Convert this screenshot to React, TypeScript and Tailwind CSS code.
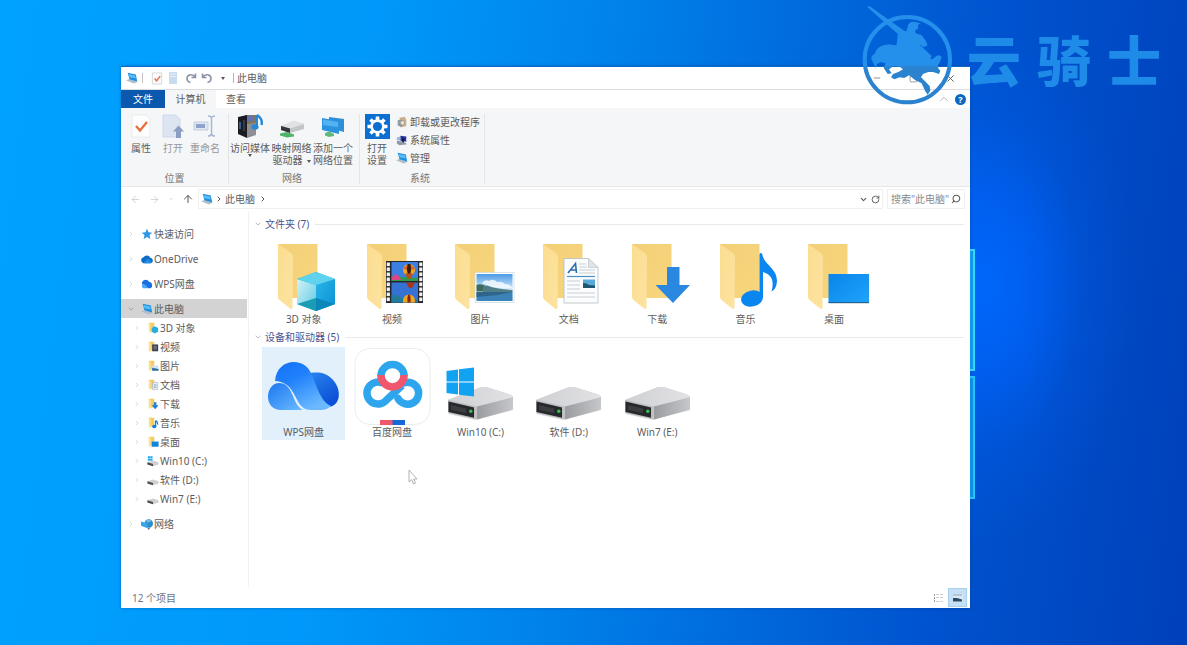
import type { ReactNode } from "react";
import {
  ArrowLeft,
  ArrowRight,
  ArrowUp,
  ChevronDown,
  ChevronRight,
  ChevronUp,
  Minus,
  RotateCw,
  Search,
  Square,
  X,
} from "lucide-react";

/* ---------- small icons ---------- */

const PcIcon = ({ className = "h-3 w-3" }: { className?: string }) => (
  <svg viewBox="0 0 14 14" className={className} aria-hidden="true">
    <path d="M0 9.5 L9 13.500 L14 11.5 L5 8z" fill="#b3bec8" />
    <path d="M2 1 L11.500 3 L13 11 L4 8.500z" fill="#1b8fe0" />
    <path d="M3 2.2 L10.800 4 L11.500 7.500 L4 6z" fill="#5cbcf7" />
  </svg>
);

const StarIcon = () => (
  <svg viewBox="0 0 14 14" className="h-3 w-3" aria-hidden="true">
    <path d="M7 1 L8.8 5 L13.2 5.4 L9.9 8.3 L10.9 12.7 L7 10.4 L3.1 12.7 L4.1 8.3 L.8 5.4 L5.2 5z" fill="#2f97e6" />
  </svg>
);

const OneDriveIcon = () => (
  <svg viewBox="0 0 14 14" className="h-3 w-3 scale-110" aria-hidden="true">
    <path d="M3.5 11.5 A3.2 3.2 0 0 1 3.3 5.2 A4 4 0 0 1 10.4 5.6 A3 3 0 0 1 11 11.5z" fill="#0f6cc4" />
    <path d="M3 11.5 L8 6.5 L12.5 10.8 Q12 11.5 11 11.5z" fill="#1d8de6" />
  </svg>
);

const WpsSmallIcon = () => (
  <svg viewBox="0 0 14 14" className="h-3 w-3 overflow-visible" aria-hidden="true">
    <path d="M1 7 A4.500 4.500 0 0 1 9.4 4.500 A4 4 0 0 1 11 12 H8.5z" fill="#1c6fe0" />
    <path d="M3 7.200 Q6 7 7.600 12 H2.600 A2.500 2.500 0 0 1 3 7.200z" fill="#4aa6f8" />
  </svg>
);

const NetworkIcon = () => (
  <svg viewBox="0 0 14 14" className="h-3 w-3 overflow-visible" aria-hidden="true">
    <circle cx="9" cy="6.5" r="5" fill="#2e8cc9" />
    <path d="M6 3 Q9 0 12.500 3 Q10 6 6.5 5z" fill="#6fbde6" />
    <path d="M0 4 L7.500 6 V12 L0 9z" fill="#39a4ea" />
    <path d="M7.500 12 L11 11 L9 14z" fill="#51718c" />
  </svg>
);

const MiniFolder = ({ children }: { children: ReactNode }) => (
  <svg viewBox="0 0 14 14" className="h-3 w-3" aria-hidden="true">
    <path d="M2 1 H8.5 V11 H5z" fill="#f3cb60" />
    <path d="M2 1 L4.8 3 V13 L2 11z" fill="#fddf8c" />
    {children}
  </svg>
);

const MiniDrive = ({ win = false }: { win?: boolean }) => (
  <svg viewBox="0 0 14 14" className="h-3 w-3" aria-hidden="true">
    {win && <path d="M1 1.5 H3.4 V3.9 H1z M3.8 1.5 H6.5 V3.9 H3.8z M1 4.3 H3.4 V6.8 H1z M3.8 4.3 H6.5 V6.8 H3.8z" fill="#18a5f0" />}
    <path d="M.5 8.5 L7 6.5 L13.5 8.5 V11 L7 13 L.5 11z" fill="#d0d0d2" />
    <path d="M.5 8.6 L7 10.6 V13 L.5 11z" fill="#4b4d50" />
  </svg>
);

const CurvedArrow = ({ flip = false }: { flip?: boolean }) => (
  <svg viewBox="0 0 12 12" className={`h-3 w-3 ${flip ? "-scale-x-100" : ""}`} aria-hidden="true">
    <path d="M10.500 1.500 V5.500 H6.500 M10 5 C8 1.500 2 2 2 6.500 Q2 9.500 5.500 10.500" fill="none" stroke="#8d93a8" strokeWidth="1.600" />
  </svg>
);

/* ---------- big icons, drawn on an 83 x 77 canvas ---------- */

const Canvas = ({ children }: { children: ReactNode }) => (
  <svg viewBox="0 0 83 77" className="h-[77px] w-[83px] overflow-visible" aria-hidden="true">
    {children}
  </svg>
);

const Folder = ({ children }: { children: ReactNode }) => (
  <Canvas>
    <path d="M16 10 H55.500 V64 H29z" fill="url(#folderBack)" />
    <path d="M16 10 L29 19 Q31 20.500 31 23 L30.500 73 Q30.500 76 28 74.500 L17.500 66 Q16 65 16 63z" fill="url(#folderFront)" />
    {children}
  </Canvas>
);

const Cube = () => (
  <Folder>
    <path d="M54 38 L73 45 V70 L54 77 L35 70 V45z" fill="#1fb1d9" />
    <path d="M35 45 L54 51 V77 L35 70z" fill="url(#cubeLeft)" />
    <path d="M54 51 L73 45 V70 L54 77z" fill="url(#cubeRight)" />
    <path d="M35 45 L54 38 L73 45 L54 51z" fill="#5fd2ee" />
    <path d="M35 70 L54 64 L54 77z" fill="#1a9cb4" />
    <path d="M54 64 L73 70 L54 77z" fill="#0a86b8" />
  </Folder>
);

const Balloon = ({ x, y, r }: { x: number; y: number; r: number }) => (
  <g transform={`translate(${x} ${y}) scale(${r})`}>
    <circle r="1" fill="#f2a71c" />
    <path d="M-.9 -.3 Q0 -1.400 .9 -.3 L.8 -.1 H-.8z" fill="#d8602a" />
    <path d="M-.25 -1 Q-.5 0 -.15 1 H.15 Q.5 0 .25 -1z" fill="#3a1a12" />
    <path d="M-.7 .6 L-.2 1.500 H.2 L.7 .6z" fill="#b5521a" />
  </g>
);

const FilmStrip = () => (
  <Folder>
    <rect x="35" y="27" width="37" height="42" fill="#24262b" />
    {[35.7, 68.2].map((x) =>
      [28.5, 33.5, 38.5, 43.5, 48.5, 53.5, 58.5, 63.5].map((y) => (
        <rect key={`${x}-${y}`} x={x} y={y} width="3.2" height="3.6" fill="#f1f1f1" />
      ))
    )}
    <rect x="40.500" y="28" width="26.500" height="19" fill="#3b7fe0" />
    <path d="M40.500 42 Q46 40 50 43 L67 44 V47 H40.500z" fill="#2f9a4a" />
    <path d="M41 43 L44 40 L48 42 L50 46 H41z" fill="#d8478d" />
    <Balloon x={58} y={36} r={6} />
    <rect x="40.500" y="48.500" width="26.500" height="20" fill="#3672d4" />
    <path d="M55 48.500 H64 L61 54 H58z" fill="#a8341c" />
    <path d="M40.500 61 Q46 59 50 64 L67 66 V68.500 H40.500z" fill="#237c9c" />
    <path d="M52 68.500 Q51.500 61 58 60.500 Q64.500 61 64 68.500z" fill="#f2a71c" />
    <path d="M56.500 68.500 Q56 62 57.500 60.500 H58.500 Q60 62 59.500 68.500z" fill="#8c2614" />
  </Folder>
);

const Photo = () => (
  <Folder>
    <rect x="36" y="38.500" width="39" height="30" fill="#fff" stroke="#cfd6dc" strokeWidth=".7" />
    <rect x="37.500" y="40" width="36" height="27" fill="url(#photoSky)" />
    <path d="M43 49 q3 -4 7 -2 q4 -3 8 1 q5 -1 8 2 q4 0 7 3 V54 Q56 56 43 49z" fill="#f4fafe" opacity=".85" />
    <path d="M37.500 51 Q43 49 48 53 Q54 56 64 57.500 H37.500z" fill="#3d6a5c" />
    <path d="M44 53 Q47 50 52 53 Q58 55 73.500 56 V58 H44z" fill="#4f7f86" />
    <path d="M37.500 58 H73.500 V67 H37.500z" fill="#3a82b8" />
    <path d="M37.500 58 H73.500 L58 61 L37.500 63z" fill="#2f6589" />
  </Folder>
);

const DocumentPage = () => (
  <Folder>
    <path d="M37 24.500 H61.500 L71 33.500 V69 H37z" fill="#fbfcfd" stroke="#b7bcc2" strokeWidth=".8" />
    <path d="M61.500 24.500 V33.500 H71z" fill="#dfe4ea" stroke="#b7bcc2" strokeWidth=".6" />
    <path d="M52 30 H59 M52 33 H60 M52 36 H68 M52 39 H68 M40 47 H53 M40 51 H53 M40 55 H53 M40 59 H68 M40 63 H68" stroke="#c9ced4" strokeWidth="1" />
    <path d="M40 42.500 H68" stroke="#4b93c4" strokeWidth="1.200" />
    <path d="M41 39 L48.500 29.500 L49.500 39 M44 36 H49" fill="none" stroke="#2c6fae" strokeWidth="1.600" />
    <rect x="56" y="45.500" width="12" height="8.500" fill="#57a9d8" />
    <path d="M56 49 Q60 49 62 51 L68 51.500 V54 H56z" fill="#1f5674" />
  </Folder>
);

const DownloadArrow = () => (
  <Folder>
    <path d="M51 33 H63.500 V51 H74 L57 69 L39.500 51 H51z" fill="#2b88e0" />
  </Folder>
);

const MusicNote = () => (
  <Folder>
    <ellipse cx="48" cy="64.500" rx="11" ry="8" transform="rotate(-12 48 64.500)" fill="#0a86f0" />
    <path d="M55.500 20 Q57 18 58.200 20 C60 31 73 34 73 47 Q72.500 55 67.500 57.500 C70 48 69 41 59 38 L59 64 L55.500 64z" fill="#0a86f0" />
  </Folder>
);

const DesktopScreen = () => (
  <Folder>
    <rect x="36.500" y="40" width="40.500" height="29" fill="url(#screenBlue)" />
    <rect x="36.500" y="68" width="40.500" height="1.200" fill="#23618f" />
  </Folder>
);

const WpsCloud = () => (
  <Canvas>
    <path d="M45 27 C55 24 64 26 69 31 C75 36 78 44 76.500 51 C75 57 71 60 65 60 C56 54 50 40 45 27z" fill="url(#wpsRight)" />
    <path d="M13 34 C14 21 23 15 31.500 15 C41 15 46.500 20 50 28 C55 40 59 55 69 59 Q65 63 59 63 H48 C39 63 36 54 32 47 C28 39 21 34 13 34z" fill="url(#wpsMain)" />
    <path d="M17 36 C25 36 28 42 31 49 C34 57 37 61 41 63 H19 C11 63 6 57 6 50 C6 42 11 36 17 36z" fill="url(#wpsLeft)" />
  </Canvas>
);

const BaiduDisk = () => (
  <Canvas>
    <rect x="4" y="1.500" width="75" height="76" rx="15" fill="#fff" stroke="#ececee" />
    <g fill="none" strokeWidth="7.500">
      <path d="M51 38.500 L35.500 53 A11 11 0 1 1 32 36.300" stroke="#2ea6ee" />
      <path d="M52.500 36 A11 11 0 1 1 47 51.500" stroke="#2ea6ee" strokeLinecap="round" />
      <path d="M29.900 29 A11.600 11.600 0 0 1 53.100 29" stroke="#2ea6ee" />
      <path d="M29.900 28 A11.600 12 0 0 0 53.100 28" stroke="#f0566c" />
    </g>
    <rect x="29" y="73" width="13" height="5" fill="#f0566c" />
    <rect x="41.500" y="73" width="12.500" height="5" fill="#1668d8" />
  </Canvas>
);

const Drive = ({ win = false }: { win?: boolean }) => (
  <Canvas>
    <path d="M9 67 L36 73 L75 63 L70 60z" fill="#000" opacity=".12" />
    <path d="M9 53 L41 40.500 Q45 39.500 49 40.500 L71 47.500 Q74 49 74 50.500 V61 Q74 62.500 72 63 L38 72.500 L9 66z" fill="#c4c5c8" />
    <path d="M9 53 L41 40.500 Q45 39.500 49 40.500 L71 47.500 Q74 49 73 50.500 L38 59.500z" fill="url(#driveTop)" />
    <path d="M38 59.500 L74 50.500 V61 Q74 62.500 72 63 L38 72.500z" fill="url(#driveSide)" />
    <path d="M9 53 L36.500 59.500 V72 L9 66z" fill="#bdbec0" />
    <path d="M9.500 54.500 L35 60.500 V70.800 L9.500 65z" fill="#26282b" />
    <path d="M12 58 L27 61.500 V66 L12 63z" fill="#3b3d40" />
    <circle cx="31.800" cy="64.300" r="1.700" fill="#35c24e" />
    {win && (
      <path d="M7.500 24 L19 22.500 V34.500 H7.500z M20 22.300 L35 20.500 V34.500 H20z M7.500 35.500 H19 V47.500 L7.500 46z M20 35.500 H35 V49.500 L20 47.700z" fill="#12a2f2" />
    )}
  </Canvas>
);

/* gradients shared by the drawings above */
const Gradients = () => (
  <svg className="absolute h-0 w-0" aria-hidden="true">
    <defs>
      <linearGradient id="folderBack" x1="0" y1="0" x2="1" y2="1">
        <stop offset="0" stopColor="#f3d078" />
        <stop offset="1" stopColor="#f8d67c" />
      </linearGradient>
      <linearGradient id="folderFront" x1="0" y1="0" x2="1" y2="1">
        <stop offset="0" stopColor="#fbdd90" />
        <stop offset="1" stopColor="#fde3a0" />
      </linearGradient>
      <linearGradient id="cubeLeft" x1="0" y1="0" x2="1" y2="1">
        <stop offset="0" stopColor="#d3f3f8" />
        <stop offset="1" stopColor="#5cc9e0" />
      </linearGradient>
      <linearGradient id="cubeRight" x1="0" y1="0" x2="1" y2="1">
        <stop offset="0" stopColor="#2ab5ea" />
        <stop offset="1" stopColor="#0a8fd2" />
      </linearGradient>
      <linearGradient id="photoSky" x1="0" y1="0" x2="0" y2="1">
        <stop offset="0" stopColor="#4d9be6" />
        <stop offset=".6" stopColor="#d5ebfa" />
      </linearGradient>
      <linearGradient id="screenBlue" x1="0" y1="0" x2="1" y2="1">
        <stop offset="0" stopColor="#0a84ea" />
        <stop offset="1" stopColor="#1ea4fb" />
      </linearGradient>
      <linearGradient id="wpsMain" x1="0" y1="0" x2=".6" y2="1">
        <stop offset="0" stopColor="#1372f6" />
        <stop offset=".4" stopColor="#1f80fb" />
        <stop offset="1" stopColor="#6bb9ff" />
      </linearGradient>
      <linearGradient id="wpsRight" x1="0" y1="0" x2=".6" y2="1">
        <stop offset="0" stopColor="#2a86ee" />
        <stop offset="1" stopColor="#0b4fd6" />
      </linearGradient>
      <linearGradient id="wpsLeft" x1="0" y1="0" x2="1" y2="1">
        <stop offset="0" stopColor="#1b76f0" />
        <stop offset="1" stopColor="#6cbcff" />
      </linearGradient>
      <linearGradient id="driveTop" x1="0" y1="0" x2="1" y2="0">
        <stop offset="0" stopColor="#cfd0d3" />
        <stop offset="1" stopColor="#e2e2e5" />
      </linearGradient>
      <linearGradient id="driveSide" x1="0" y1="0" x2="1" y2="0">
        <stop offset="0" stopColor="#9b9c9f" />
        <stop offset="1" stopColor="#c6c7ca" />
      </linearGradient>
    </defs>
  </svg>
);

/* ---------- data ---------- */

const folders = [
  { name: "3D 对象", icon: <Cube /> },
  { name: "视频", icon: <FilmStrip /> },
  { name: "图片", icon: <Photo /> },
  { name: "文档", icon: <DocumentPage /> },
  { name: "下载", icon: <DownloadArrow /> },
  { name: "音乐", icon: <MusicNote /> },
  { name: "桌面", icon: <DesktopScreen /> },
];

const drives = [
  { name: "WPS网盘", icon: <WpsCloud />, selected: true },
  { name: "百度网盘", icon: <BaiduDisk /> },
  { name: "Win10 (C:)", icon: <Drive win /> },
  { name: "软件 (D:)", icon: <Drive /> },
  { name: "Win7 (E:)", icon: <Drive /> },
];

const pcChildren = [
  { name: "3D 对象", icon: <MiniFolder><path d="M9 5 L13 7 V11.500 L9 13.500 L5.500 11.500 V7z" fill="#25aede" /></MiniFolder> },
  { name: "视频", icon: <MiniFolder><path d="M6 4 H13 V12 H6z" fill="#3a4050" /><path d="M7.500 5.500 H11.500 V10 H7.500z" fill="#6c6a7c" /></MiniFolder> },
  { name: "图片", icon: <MiniFolder><path d="M6 6.500 H13.500 V12.500 H6z" fill="#cfe3f2" /><path d="M6 9 L13.500 10.500 V12.500 H6z" fill="#2f6fa8" /></MiniFolder> },
  { name: "文档", icon: <MiniFolder><path d="M6.500 4 H12.500 V12.500 H6.500z" fill="#e8eef3" stroke="#9db2c4" strokeWidth=".7" /><path d="M8 7 H11 M8 9.500 H11" stroke="#5b93bd" /></MiniFolder> },
  { name: "下载", icon: <MiniFolder><path d="M8 5 H11 V8.500 H13.500 L9.500 13 L5.500 8.500 H8z" fill="#1f7fdb" /></MiniFolder> },
  { name: "音乐", icon: <MiniFolder><ellipse cx="8.500" cy="11" rx="2.500" ry="2" fill="#0a80e8" /><path d="M10 4 V11 M10.300 4 Q13 6 12.500 9" fill="none" stroke="#0a80e8" strokeWidth="1.500" /></MiniFolder> },
  { name: "桌面", icon: <MiniFolder><path d="M5.500 6.500 H13.500 V12.500 H5.500z" fill="#0f84e2" /></MiniFolder> },
  { name: "Win10 (C:)", icon: <MiniDrive win /> },
  { name: "软件 (D:)", icon: <MiniDrive /> },
  { name: "Win7 (E:)", icon: <MiniDrive /> },
];

/* ---------- ribbon ---------- */

const RibbonButton = ({ icon, lines, className }: { icon: ReactNode; lines: ReactNode[]; className: string }) => (
  <button className={`flex flex-col items-center ${className}`}>
    <span className="mb-1 flex h-6 items-center justify-center">{icon}</span>
    {lines.map((line, i) => (
      <span key={i} className="flex whitespace-nowrap leading-3">{line}</span>
    ))}
  </button>
);

const RibbonGroup = ({ title, className, children }: { title: string; className: string; children: ReactNode }) => (
  <section className={`flex flex-col justify-between border-r border-[#e4e5e7] ${className}`}>
    <div className="flex">{children}</div>
    <h2 className="pr-1 text-center leading-3 text-[#777]">{title}</h2>
  </section>
);

const Caret = ({ className = "" }: { className?: string }) => (
  <svg viewBox="0 0 4 3" className={`inline-block h-[3px] w-1 align-middle ${className}`} aria-hidden="true">
    <path d="M0 0 H4 L2 3z" fill="#555" />
  </svg>
);

const Ribbon = () => (
  <div className="flex h-[79px] border-b border-[#e6e7e8] bg-[#f5f6f7] pb-[2px] pt-[6px]">
    <RibbonGroup title="位置" className="w-[108px] pl-1">
      <RibbonButton
        className="w-8"
        lines={["属性"]}
        icon={
          <svg viewBox="0 0 20 24" className="h-6 w-5">
            <path d="M1 1 H15 L19 5 V23 H1z" fill="#fdfdfe" stroke="#e6e8ea" strokeWidth=".8" />
            <path d="M5 12 L9 16.500 L16 8" fill="none" stroke="#e2713e" strokeWidth="2.400" />
          </svg>
        }
      />
      <RibbonButton
        className="w-8 text-[#999]"
        lines={["打开"]}
        icon={
          <svg viewBox="0 0 22 24" className="h-6 w-[22px]">
            <path d="M1 1 H14 L18 5 V23 H1z" fill="#dde5f3" stroke="#c9d4e8" strokeWidth=".8" />
            <path d="M16.500 11.500 L22 17.500 H19 V24 H14 V17.500 H11z" fill="#8b9dc0" />
          </svg>
        }
      />
      <RibbonButton
        className="w-8 text-[#999]"
        lines={["重命名"]}
        icon={
          <svg viewBox="0 0 24 24" className="h-6 w-6">
            <path d="M1 8 H15 V16 H1z" fill="#dfe6f3" stroke="#b9c5dc" strokeWidth=".8" />
            <path d="M3 10 H12 V14 H3z" fill="#8fa3ca" />
            <path d="M15 2 Q18 2 18.500 4 Q19 2 22 2 M18.500 4 V20 M15 22 Q18 22 18.500 20 Q19 22 22 22" fill="none" stroke="#a9b7d2" strokeWidth="1.500" />
          </svg>
        }
      />
    </RibbonGroup>

    <RibbonGroup title="网络" className="w-[131px]">
      <RibbonButton
        className="w-[42px]"
        lines={["访问媒体", <Caret key="c" />]}
        icon={
          <svg viewBox="0 0 26 24" className="h-6 w-[26px]">
            <path d="M8 1 H19 V12 H8z" fill="#80765c" />
            <path d="M9 2 H17 V7 H9z" fill="#6470b8" />
            <path d="M10 10 L19 9 V21 L10 24z" fill="#8d8f93" />
            <path d="M1 3 L10 1 V24 L1 20z" fill="#1a1c22" />
            <path d="M3 8 V15" stroke="#4c86d8" strokeWidth="1.200" />
            <path d="M7 6 V17" stroke="#4b4f58" strokeWidth="1.200" />
            <path d="M20 1 Q26 5 24.500 11" fill="none" stroke="#2488d6" strokeWidth="2.400" />
            <path d="M20 1 V12" stroke="#2488d6" strokeWidth="2" />
            <ellipse cx="18" cy="13" rx="3.600" ry="2.800" fill="#2488d6" />
          </svg>
        }
      />
      <RibbonButton
        className="w-[41px]"
        lines={["映射网络", <span key="d">驱动器<Caret className="ml-1" /></span>]}
        icon={
          <svg viewBox="0 0 26 24" className="h-6 w-[26px]">
            <path d="M2 12 L15 7 L25 10 V15 L11 19 L2 16z" fill="#c3c5c8" />
            <path d="M2 12 L15 7 L25 10 L11 14.500z" fill="#e1e2e4" />
            <path d="M2 12 L11 14.500 V19 L2 16z" fill="#33363a" />
            <path d="M1 19.500 L8 18 L15 20.500 V22.500 L8 23.500 L1 21.500z" fill="#4fb36a" />
          </svg>
        }
      />
      <RibbonButton
        className="w-[42px]"
        lines={["添加一个", "网络位置"]}
        icon={
          <svg viewBox="0 0 26 24" className="h-6 w-[26px]">
            <path d="M9 3 L24 5 V18 L9 14z" fill="#2f8ed6" />
            <path d="M2 4 L19 7 V20 L2 16z" fill="#2b93e0" />
            <path d="M3 5.500 L18 8 V13 L3 11z" fill="#53b3f2" />
            <path d="M5 19 L9 17.500 L14 20 V22 L9 23 L5 21.500z" fill="#5fba76" />
          </svg>
        }
      />
    </RibbonGroup>

    <RibbonGroup title="系统" className="w-[125px]">
      <RibbonButton
        className="w-[34px]"
        lines={["打开", "设置"]}
        icon={
          <svg viewBox="0 0 25 25" className="h-[25px] w-[25px]">
            <rect width="25" height="25" fill="#0a6fd0" />
            <g stroke="#fff" strokeWidth="3.600">
              <path d="M12.500 2.500 V22.500 M2.500 12.500 H22.500 M5.500 5.500 L19.500 19.500 M19.500 5.500 L5.500 19.500" />
            </g>
            <circle cx="12.500" cy="12.500" r="7.200" fill="#fff" />
            <circle cx="12.500" cy="12.500" r="4.600" fill="#0a6fd0" />
          </svg>
        }
      />
      <ul className="flex flex-col gap-[6px] pl-[2px] pt-[2px]">
        <li>
          <button className="flex items-center gap-[2px] whitespace-nowrap leading-3">
            <svg viewBox="0 0 14 14" className="h-3 w-3">
              <path d="M4 2 L10 1 L12 4 V12 L5 13z" fill="#c9b08e" />
              <path d="M2 5 L7 4 V13 L2 11z" fill="#8e9aa5" />
              <circle cx="7.500" cy="8" r="2.500" fill="#e9e4dc" stroke="#9a8f80" strokeWidth=".8" />
            </svg>
            卸载或更改程序
          </button>
        </li>
        <li>
          <button className="flex items-center gap-[2px] whitespace-nowrap leading-3">
            <svg viewBox="0 0 14 14" className="h-3 w-3">
              <path d="M5 2 L12 3 V9 L5 8z" fill="#2338a8" />
              <path d="M1 4 L5 3 V8 L1 7z" fill="#9fb4d8" />
              <path d="M1 8 L9 9 L13 12 L4 13 L1 11z" fill="#8f98a8" />
              <path d="M7 4 L10 5 L9 10 L7 9z" fill="#141c4c" />
            </svg>
            系统属性
          </button>
        </li>
        <li>
          <button className="flex items-center gap-[2px] whitespace-nowrap leading-3">
            <PcIcon />
            管理
          </button>
        </li>
      </ul>
    </RibbonGroup>
  </div>
);

/* ---------- window parts ---------- */

const TitleBar = () => (
  <header className="flex h-[23px] items-center border-b border-[#dcdde0] pl-[5px] pr-[14px]">
    <PcIcon />
    <span className="ml-1 h-[10px] border-l border-[#c4c4c4]" />
    <button aria-label="属性" className="ml-2">
      <svg viewBox="0 0 12 14" className="h-[13px] w-3">
        <path d="M1 1 H11 V13 H1z" fill="#fbfbfb" stroke="#d6d6da" />
        <path d="M3.500 7 L5.500 9.500 L9.500 4.500" fill="none" stroke="#df6a4a" strokeWidth="1.500" />
      </svg>
    </button>
    <button aria-label="新建文件夹" className="ml-[6px]">
      <svg viewBox="0 0 8 12" className="h-3 w-2">
        <path d="M0 0 H8 V12 H0z" fill="#c9dbee" />
        <path d="M1 2 H7 M1 4.500 H7" stroke="#e6eff8" />
      </svg>
    </button>
    <button aria-label="恢复" className="ml-2"><CurvedArrow /></button>
    <button aria-label="撤销" className="ml-1"><CurvedArrow flip /></button>
    <button aria-label="自定义快速访问工具栏" className="ml-2 flex h-3 items-center"><Caret /></button>
    <span className="ml-2 mr-[3px] h-[10px] border-l border-[#b4b4b4]" />
    <h1>此电脑</h1>
    <div className="ml-auto flex items-center gap-[27px] text-[#555]">
      <button aria-label="最小化"><Minus size={10} strokeWidth={1.5} /></button>
      <button aria-label="最大化"><Square size={9} strokeWidth={1.5} /></button>
      <button aria-label="关闭"><X size={11} strokeWidth={2} /></button>
    </div>
  </header>
);

const Tabs = () => (
  <div className="flex h-[18px] items-stretch pr-1" role="tablist">
    <button role="tab" className="w-11 bg-[#0a59ae] text-white">文件</button>
    <button role="tab" aria-selected="true" className="w-[51px] bg-[#f5f6f7]">计算机</button>
    <button role="tab" className="w-10">查看</button>
    <div className="ml-auto flex items-center gap-1">
      <button aria-label="最小化功能区" className="text-[#aaa]"><ChevronUp size={14} strokeWidth={1.5} /></button>
      <button aria-label="帮助" className="flex h-[11px] w-[11px] items-center justify-center rounded-full bg-[#0a68be] text-[9px] font-bold leading-none text-white">?</button>
    </div>
  </div>
);

const AddressRow = () => (
  <div className="flex h-[24px] items-center gap-1 px-[5px]">
    <div className="flex w-[68px] items-center justify-between pl-1">
      <button aria-label="后退" className="text-[#c2c2c2]"><ArrowLeft size={11} strokeWidth={1.5} /></button>
      <button aria-label="前进" className="text-[#c2c2c2]"><ArrowRight size={11} strokeWidth={1.5} /></button>
      <button aria-label="最近位置" className="text-[#c2c2c2]"><ChevronDown size={6} /></button>
      <button aria-label="上移" className="text-[#555]"><ArrowUp size={12} strokeWidth={2} /></button>
    </div>
    <div className="flex h-5 flex-1 items-center border border-[#f0f0f1] px-[2px]">
      <PcIcon />
      <ChevronRight size={8} strokeWidth={3} className="mx-[2px] text-[#555]" />
      <button>此电脑</button>
      <ChevronRight size={8} strokeWidth={3} className="ml-1 text-[#555]" />
      <button aria-label="以前的位置" className="ml-auto"><ChevronDown size={9} strokeWidth={3} /></button>
      <button aria-label="刷新" className="ml-[3px]"><RotateCw size={9} strokeWidth={2.5} /></button>
    </div>
    <label className="flex h-5 w-[78px] items-center border border-[#f0f0f1] px-[3px]">
      <input aria-label="搜索" placeholder={'搜索"此电脑"'} className="w-full min-w-0 flex-1 outline-none placeholder:text-[#8a8a8a]" />
      <Search size={10} strokeWidth={2.5} className="shrink-0 -scale-x-100" />
    </label>
  </div>
);

const TreeRow = ({ icon, name, child = false, open = false }: { icon: ReactNode; name: string; child?: boolean; open?: boolean }) => (
  <a
    href="#"
    className={`mr-[1px] flex h-[19px] items-center whitespace-nowrap ${child ? "pl-3" : "pl-[6px]"} ${open ? "bg-[#d3d3d3]" : ""}`}
  >
    {open ? (
      <ChevronDown size={8} strokeWidth={2} className="text-[#888]" />
    ) : (
      <ChevronRight size={8} strokeWidth={2} className="text-[#c8c8c8]" />
    )}
    <span className="ml-[6px] mr-[1px]">{icon}</span>
    {name}
  </a>
);

const Sidebar = () => (
  <nav className="w-32 shrink-0 border-r border-[#f0f0f0] pt-[13px]">
    <ul className="flex flex-col gap-[6px]">
      <li><TreeRow icon={<StarIcon />} name="快速访问" /></li>
      <li><TreeRow icon={<OneDriveIcon />} name="OneDrive" /></li>
      <li><TreeRow icon={<WpsSmallIcon />} name="WPS网盘" /></li>
      <li>
        <TreeRow icon={<PcIcon />} name="此电脑" open />
        <ul>
          {pcChildren.map((item) => (
            <li key={item.name}><TreeRow icon={item.icon} name={item.name} child /></li>
          ))}
        </ul>
      </li>
      <li><TreeRow icon={<NetworkIcon />} name="网络" /></li>
    </ul>
  </nav>
);

type Item = { name: string; icon: ReactNode; selected?: boolean };

const ItemGroup = ({ title, items }: { title: string; items: Item[] }) => (
  <section>
    <h2 className="flex h-5 items-center text-[#4c5490]">
      <ChevronDown size={8} strokeWidth={2} className="ml-[5px] mr-[3px] text-[#999]" />
      {title}
      <span className="ml-[6px] flex-1 border-t border-[#e9e9ec]" />
    </h2>
    <div className="grid grid-cols-8 gap-[5px] pl-[13px]">
      {items.map((item) => (
        <button
          key={item.name}
          className={`flex h-[93px] flex-col items-center ${item.selected ? "bg-[#e2f0fc]" : ""}`}
        >
          {item.icon}
          <span className="relative whitespace-nowrap leading-4">{item.name}</span>
        </button>
      ))}
    </div>
  </section>
);

const StatusBar = () => (
  <footer className="flex h-[21px] items-center pl-[11px] pr-[3px] text-[#6d7484]">
    <span>12 个项目</span>
    <button aria-label="详细信息" className="ml-auto mr-1 flex h-[19px] items-center">
      <svg viewBox="0 0 10 10" className="h-[10px] w-[10px]">
        <path d="M.5 1 V9" stroke="#999" strokeDasharray="2 1" />
        <path d="M2 1.500 H5 M6 1.500 H9 M2 4.500 H5 M6 4.500 H9 M2 8.500 H5 M6 8.500 H9" stroke="#cfcfcf" />
      </svg>
    </button>
    <button aria-label="大图标" className="flex h-[19px] w-[19px] items-center justify-center border border-[#a5d0ee] bg-[#c5e0f4]">
      <svg viewBox="0 0 10 8" className="h-2 w-[10px]">
        <path d="M0 0 H10 V8 H0z" fill="#dce8f2" />
        <path d="M0 1 H9" stroke="#8da6ba" />
        <path d="M0 4 L4 4 L9 5.500 V7.500 H0z" fill="#2b4c66" />
      </svg>
    </button>
  </footer>
);

/* knight badge with the brand name beside it */
const Watermark = () => (
  <div className="pointer-events-none absolute right-[26px] top-[5px] flex items-center gap-3 text-[#1f8be8]">
    <svg viewBox="30 15 282 300" className="h-[100px] w-[94px]" aria-hidden="true">
      <defs>
        <linearGradient id="badge" gradientUnits="userSpaceOnUse" x1="0" y1="15" x2="0" y2="315">
          <stop offset=".6" stopColor="#2590ec" />
          <stop offset=".62" stopColor="#2b83cf" />
        </linearGradient>
      </defs>
      <circle cx="169" cy="179" r="128" fill="none" stroke="url(#badge)" strokeWidth="12" />
      <path d="M48 20 L56 19 L168 98 L242 168 L234 180 L150 110z" fill="url(#badge)" />
      <path
        d="M62 178 C58 170 66 166 72 160 C76 146 90 134 108 134 C120 132 130 138 137 134 L140 104 L152 92 L166 94 L170 82 C170 72 180 62 192 66 L208 70 L200 76 L202 84 L192 92 L194 100 L212 106 L224 122 L230 136 L218 142 L206 132 L202 146 L226 164 L242 178 C250 176 254 166 264 166 L272 170 L266 188 C258 196 260 204 268 212 L264 222 L246 216 L232 216 L216 222 L210 232 L222 244 L236 258 L238 272 L230 284 L222 272 L212 250 L192 240 L174 226 L160 234 L146 232 L130 238 L120 232 L126 222 L142 216 L156 208 L146 200 L128 198 L114 208 L122 220 L110 222 L98 204 L104 190 L90 186 L78 192 L74 204z"
        fill="url(#badge)"
      />
    </svg>
    <div className="mt-3 flex gap-4 text-[54px] font-black leading-none">
      <span>云</span>
      <span>骑</span>
      <span>士</span>
    </div>
  </div>
);

export default function App() {
  return (
    <div className="relative flex min-h-screen flex-col overflow-hidden bg-[radial-gradient(ellipse_150px_260px_at_985px_285px,#0068ffee_0%,#0064fbb0_35%,#0060f040_65%,#0060f000_100%),linear-gradient(97deg,#00a2ff_0%,#0098fa_30%,#0085ec_47%,#006cde_63%,#0052ce_80%,#0040ba_100%)] pb-[37px] pl-[121px] pr-[217px] pt-[66px] font-['Noto_Sans','Noto_Sans_CJK_SC',sans-serif] text-[10px] leading-4 text-[#5c5c5c]">
      <Gradients />
      <div className="relative flex flex-1 flex-col">
        {/* lit panes of the wallpaper, mostly hidden by the window */}
        <div className="absolute left-full top-[183px] z-10 flex flex-col gap-[5px]">
          <div className="h-[122px] w-[5px] border-2 border-l-0 border-[#36d4ff] bg-[#0a9bea]" />
          <div className="h-[123px] w-[5px] border-2 border-l-0 border-[#24c4fb] bg-[#0a93e6]" />
        </div>

        <div className="flex flex-1 flex-col border-t border-[#0a6cc8] bg-white shadow-[0_0_3px_rgba(0,60,140,0.5)]">
          <TitleBar />
          <Tabs />
          <Ribbon />
          <AddressRow />
          <div className="flex flex-1">
            <Sidebar />
            <main className="relative flex flex-1 flex-col pr-[6px] pt-[3px]">
              <ItemGroup title="文件夹 (7)" items={folders} />
              <ItemGroup title="设备和驱动器 (5)" items={drives} />
              <svg viewBox="0 0 10 16" className="absolute left-[159px] top-[258px] h-4 w-[10px]" aria-hidden="true">
                <path d="M1 1 V13 L3.800 10.500 L5.500 15 L7.500 14 L5.700 10 H9z" fill="#fff" stroke="#a0a0a0" strokeWidth=".8" />
              </svg>
            </main>
          </div>
          <StatusBar />
        </div>
      </div>
      <Watermark />
    </div>
  );
}
